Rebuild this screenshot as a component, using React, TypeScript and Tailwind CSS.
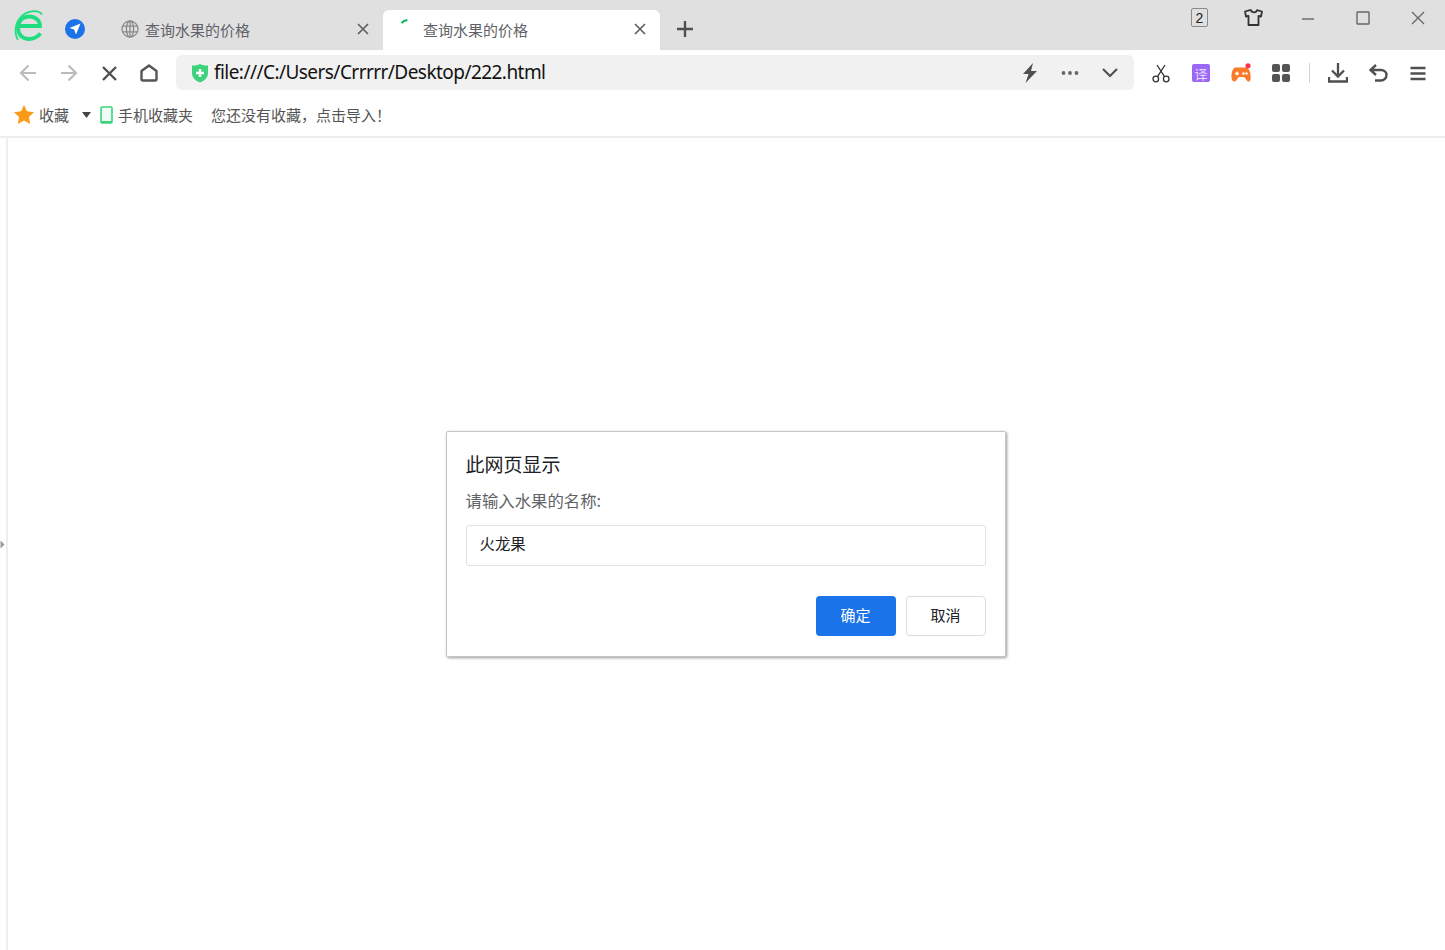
import React from "react";

const cjk = "font-['Microsoft_YaHei','Noto_Sans_CJK_SC','Noto_Sans',sans-serif]";

function Close({ s = 12, c = "#5c5c5c", w = 1.6 }: { s?: number; c?: string; w?: number }) {
  return (
    <svg width={s} height={s} viewBox="0 0 12 12" fill="none" stroke={c} strokeWidth={w}>
      <path d="M1 1l10 10M11 1L1 11" />
    </svg>
  );
}

function Logo() {
  return (
    <svg width="30" height="34" viewBox="0 0 30 34" fill="none" stroke="#20dd80">
      <path d="M6 17H26C26 11 21 7.500 15 7.500 8.500 7.500 4 12.500 4 19 4 26 9 30 15 30 19.500 30 23.500 28 26.500 24.500" strokeWidth="3.800" />
      <path d="M28 5.500C24 0 12 1.500 6 9 1 15 0 24 4 31" strokeWidth="1.700" />
    </svg>
  );
}

function Tab({ active, children }: { active?: boolean; children: React.ReactNode }) {
  return (
    <div className={`flex h-10 w-[277px] shrink-0 items-center rounded-t-md pb-[2px] pr-[14px] ${active ? "bg-white" : ""}`}>
      {children}
      <span className={`${cjk} text-[15px] leading-none text-[#5f6368]`}>查询水果的价格</span>
      <span className="ml-auto flex h-3 w-3 items-center">
        <Close />
      </span>
    </div>
  );
}

function ToolBtn({ children }: { children: React.ReactNode }) {
  return <div className="flex h-10 w-10 shrink-0 items-center justify-center">{children}</div>;
}

export default function App() {
  return (
    <div className="flex h-[950px] w-[1445px] flex-col overflow-hidden bg-white">
      {/* tab strip */}
      <div className="flex h-[50px] shrink-0 items-end bg-[#e0e0e0]">
        <div className="ml-[14px] mb-[7px] flex h-[34px] w-[30px] items-center justify-center">
          <Logo />
        </div>
        <div className="mb-[11px] ml-[21px] flex h-5 w-5 items-center justify-center rounded-full bg-[#1a73e8]">
          <svg width="12" height="12" viewBox="0 0 12 12">
            <path d="M11.500 0.500L0.500 5l4.600 1.600L7 11.500z" fill="#fff" />
          </svg>
        </div>
        <div className="ml-[36px] flex h-10 w-[249px] items-center pb-[2px]">
          <svg className="mr-[6px]" width="18" height="18" viewBox="0 0 18 18" fill="none" stroke="#8a8a8a" strokeWidth="1.300">
            <circle cx="9" cy="9" r="8" />
            <ellipse cx="9" cy="9" rx="3.600" ry="8" />
            <path d="M1.500 6.200h15M1.500 11.800h15M9 1v16" />
          </svg>
          <span className={`${cjk} text-[15px] leading-none text-[#5f6368]`}>查询水果的价格</span>
          <span className="ml-auto mr-[1px] flex h-3 w-3 items-center">
            <Close />
          </span>
        </div>
        <div className="ml-[13px]">
          <Tab active>
            <svg className="ml-[18px] mr-[15px] mb-[9px] shrink-0" width="7" height="12" viewBox="0 0 7 12" fill="none">
              <path d="M0.600 4.200C1.500 2.700 3.400 1.400 6.400 1" stroke="#10b860" strokeWidth="2" />
            </svg>
          </Tab>
        </div>
        <div className="mb-[13px] ml-[17px] flex h-4 w-4 items-center justify-center">
          <svg width="16" height="16" viewBox="0 0 16 16" stroke="#505050" strokeWidth="2.400">
            <path d="M8 0v16M0 8h16" />
          </svg>
        </div>
        <div className="ml-auto flex h-full items-start pt-2">
          <div className="mr-[36px] flex h-[19px] w-[17px] items-center justify-center rounded-[2px] border-[1.500px] border-[#8c8c8c] font-['Liberation_Sans',sans-serif] text-[14px] leading-none text-[#222]">
            2
          </div>
          <svg className="mr-[38px] mt-[1px]" width="19" height="17" viewBox="0 0 19 17" fill="none" stroke="#333" strokeWidth="1.800" strokeLinejoin="round">
            <path d="M6 1.200L1 2.500l1 5 2.500-.5v9h10V7l2.500.5 1-5-5-1.300c-.5 3-5.500 3-6 0z" />
          </svg>
          <svg className="mr-[41px] mt-[2px]" width="14" height="16" viewBox="0 0 14 16" stroke="#666" strokeWidth="1.400">
            <path d="M1 9h12" />
          </svg>
          <svg className="mr-[41px] mt-[3px]" width="14" height="14" viewBox="0 0 14 14" fill="none" stroke="#666" strokeWidth="1.400">
            <rect x="1" y="1" width="12" height="12" rx="0.500" />
          </svg>
          <svg className="mr-[20px] mt-[3px]" width="14" height="14" viewBox="0 0 14 14" fill="none" stroke="#666" strokeWidth="1.300">
            <path d="M1 1l12 12M13 1L1 13" />
          </svg>
        </div>
      </div>

      {/* toolbar */}
      <div className="flex h-[45px] shrink-0 items-start pl-2 pt-[3px]">
        <ToolBtn>
          <svg width="18" height="18" viewBox="0 0 18 18" fill="none" stroke="#bcbcbc" strokeWidth="2.200">
            <path d="M17 9H2M9.500 1.500L2 9l7.500 7.500" />
          </svg>
        </ToolBtn>
        <ToolBtn>
          <svg className="ml-[1px]" width="18" height="18" viewBox="0 0 18 18" fill="none" stroke="#bcbcbc" strokeWidth="2.200">
            <path d="M1 9h15M8.500 1.500L16 9l-7.500 7.500" />
          </svg>
        </ToolBtn>
        <ToolBtn>
          <svg className="ml-[2px]" width="15" height="15" viewBox="0 0 15 15" fill="none" stroke="#505050" strokeWidth="2.400">
            <path d="M1 1l13 13M14 1L1 14" />
          </svg>
        </ToolBtn>
        <ToolBtn>
          <svg className="ml-[2px]" width="18" height="18" viewBox="0 0 18 18" fill="none" stroke="#555" strokeWidth="2.400" strokeLinejoin="round">
            <path d="M1.500 7L9 1.500 16.500 7v8a1.500 1.500 0 01-1.500 1.500H3A1.500 1.500 0 011.500 15z" />
          </svg>
        </ToolBtn>
        <div className="ml-[8px] mt-[2px] flex h-[35px] w-[958px] shrink-0 items-center rounded-md bg-[#f1f1f1] pl-[15px]">
          <svg className="mr-[5px] shrink-0" width="18" height="20" viewBox="0 0 18 20">
            <path d="M1 2.500C4 2.500 6.500 2 9 1c2.500 1 5 1.500 8 1.500V10c0 4.500-3.500 8-8 9.500C4.500 18 1 14.500 1 10z" fill="#3ed27c" />
            <path d="M9 6v8M5 10h8" stroke="#fff" strokeWidth="2.400" />
          </svg>
          <span className="font-['Noto_Sans',sans-serif] text-[19px] leading-none tracking-[-0.55px] text-[#111]">
            file:///C:/Users/Crrrrr/Desktop/222.html
          </span>
          <div className="ml-auto flex items-center pr-[4px]">
            <ToolBtn>
              <svg width="16" height="20" viewBox="0 0 16 20">
                <path d="M11 0L1 11h5.500L3.500 20 15 8H9z" fill="#505050" />
              </svg>
            </ToolBtn>
            <ToolBtn>
              <svg width="18" height="4" viewBox="0 0 18 4" fill="#666">
                <circle cx="2.500" cy="2" r="1.900" />
                <circle cx="9" cy="2" r="1.900" />
                <circle cx="15.500" cy="2" r="1.900" />
              </svg>
            </ToolBtn>
            <ToolBtn>
              <svg width="16" height="10" viewBox="0 0 16 10" fill="none" stroke="#505050" strokeWidth="2.200">
                <path d="M1 1l7 7 7-7" />
              </svg>
            </ToolBtn>
          </div>
        </div>
        <div className="ml-[7px] flex items-center">
          <ToolBtn>
            <svg width="18" height="19" viewBox="0 0 18 19" fill="none" stroke="#333" strokeWidth="1.300">
              <circle cx="3.800" cy="15" r="2.800" />
              <circle cx="14.200" cy="15" r="2.800" />
              <path d="M5.500 12.700L13 1M12.500 12.700L5 1" />
            </svg>
          </ToolBtn>
          <ToolBtn>
            <div className={`${cjk} flex h-[18px] w-[18px] items-center justify-center rounded-[2px] bg-[#9a68f5] text-[13px] leading-none text-[#e8dcff]`}>
              译
            </div>
          </ToolBtn>
          <ToolBtn>
            <svg width="22" height="20" viewBox="0 0 22 20">
              <path d="M6 4.500h9c3 0 4.500 2 5.200 5.500.6 3.500 1 8-1.200 8.500-2 .5-3.500-3.500-5-4.500H9c-1.500 1-3 5-5 4.500-2.500-.5-3-4.500-2.200-8.500C2.500 6.500 3.500 4.500 6 4.500z" fill="#fb7a28" />
              <path d="M5 10.500h4M7 8.500v4" stroke="#fff" strokeWidth="1.400" />
              <circle cx="13.500" cy="10.500" r="1.200" fill="#fff" />
              <circle cx="16.500" cy="10.500" r="1.200" fill="#fff" />
              <circle cx="18" cy="2.800" r="2.600" fill="#f8364c" />
            </svg>
          </ToolBtn>
          <ToolBtn>
            <div className="grid h-[18px] w-[18px] grid-cols-2 gap-[2px]">
              <div className="rounded-[2px] bg-[#555]" />
              <div className="rounded-[2px] bg-[#555]" />
              <div className="rounded-[2px] bg-[#555]" />
              <div className="rounded-[2px] bg-[#555]" />
            </div>
          </ToolBtn>
          <div className="ml-[8px] mr-[8px] h-5 w-px bg-[#d4d4d4]" />
          <ToolBtn>
            <svg width="20" height="20" viewBox="0 0 20 20" fill="none" stroke="#505050" strokeWidth="2.300">
              <path d="M10 0v13M4 7.500l6 6 6-6M1 14v4.500h18V14" />
            </svg>
          </ToolBtn>
          <ToolBtn>
            <svg width="19" height="18" viewBox="0 0 19 18" fill="none" stroke="#505050" strokeWidth="2.400">
              <path d="M7 1L1.500 6 7 11M2 6h10c3 0 5.500 2 5.500 5s-2.500 5.500-5.500 5.500H6" />
            </svg>
          </ToolBtn>
          <ToolBtn>
            <svg width="16" height="15" viewBox="0 0 16 15" stroke="#505050" strokeWidth="2.300">
              <path d="M0.500 2h15M0.500 7.500h15M0.500 13h15" />
            </svg>
          </ToolBtn>
        </div>
      </div>

      {/* bookmarks */}
      <div className={`${cjk} flex h-[43px] shrink-0 items-center border-b-2 border-[#ededed] pb-[2px] pl-[14px] text-[15px] leading-none text-[#555]`}>
        <svg className="mr-[5px] shrink-0" width="20" height="19" viewBox="0 0 20 19">
          <path d="M10 0l3 6.300 7 .9-5.100 4.800 1.300 6.900L10 15.500l-6.200 3.400 1.300-6.900L0 7.200l7-.9z" fill="#fb9a18" />
        </svg>
        <span>收藏</span>
        <svg className="ml-[13px] mr-[9px]" width="9" height="6" viewBox="0 0 9 6">
          <path d="M0 0h9L4.500 6z" fill="#444" />
        </svg>
        <svg className="mr-[5px] shrink-0" width="13" height="18" viewBox="0 0 13 18" fill="none">
          <rect x="1" y="1" width="11" height="16" rx="1" fill="#f2fcf6" stroke="#3ed27c" strokeWidth="1.600" />
          <path d="M1 15h11v2H1z" fill="#3ed27c" />
        </svg>
        <span>手机收藏夹</span>
        <span className="ml-[18px]">您还没有收藏，点击导入！</span>
      </div>

      {/* page */}
      <div className="flex min-h-0 flex-1">
        <div className="flex w-2 shrink-0 items-center border-r-2 border-[#eeeeee]">
          <svg width="5" height="9" viewBox="0 0 5 9">
            <path d="M0.500 0.500L4.500 4.500 0.500 8.500z" fill="#9a9a9a" />
          </svg>
        </div>
        <div className="flex flex-1 items-center justify-center">
          <div className={`${cjk} mr-[2px] flex h-[226px] w-[560px] flex-col rounded-[2px] border border-[#c6c6c6] bg-white px-[19px] pt-[20px] shadow-[1px_1px_3px_rgba(0,0,0,0.4)]`}>
            <div className="text-[19px] leading-[24px] text-[#202124]">此网页显示</div>
            <div className="mt-[13px] text-[16.400px] leading-[22px] text-[#5f6368]">请输入水果的名称:</div>
            <div className="mt-[14px] flex h-[41px] items-center rounded-[3px] border border-[#dfe1e5] pb-[3px] pl-[13px] text-[15.400px] leading-none text-[#202124]">
              火龙果
            </div>
            <div className="mt-[30px] flex justify-end gap-[10px] text-[15px] leading-none">
              <div className="flex h-10 w-20 items-center justify-center rounded-[4px] bg-[#1a73e8] pb-[3px] text-white">确定</div>
              <div className="flex h-10 w-20 items-center justify-center rounded-[4px] border border-[#dadce0] pb-[3px] text-[#202124]">取消</div>
            </div>
          </div>
        </div>
      </div>
    </div>
  );
}
